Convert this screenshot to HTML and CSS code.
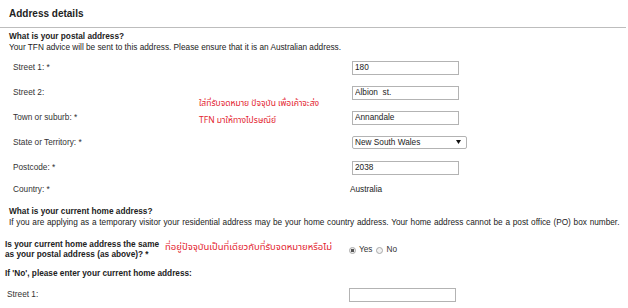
FILE: index.html
```html
<!DOCTYPE html>
<html lang="en">
<head>
    <meta charset="UTF-8">
    <title>Address details</title>
    <link rel="stylesheet" href="styles.css">
</head>
<body>

<div class="page">
    <h2 class="page-title">Address details</h2>

    <div class="section postal">
        <div class="intro">
            <div class="question">What is your postal address?</div>
            <div>Your TFN advice will be sent to this address. Please ensure that it is an Australian address.</div>
        </div>

        <div class="rows">
            <div class="form-row">
                <label class="form-label">Street 1: *</label>
                <input type="text" class="text-field" value="180">
            </div>
            <div class="form-row">
                <label class="form-label">Street 2:</label>
                <input type="text" class="text-field" value="Albion  st.">
            </div>
            <div class="form-row">
                <label class="form-label">Town or suburb: *</label>
                <input type="text" class="text-field" value="Annandale">
            </div>
            <div class="form-row">
                <label class="form-label">State or Territory: *</label>
                <span class="select-wrap">
                    <select class="select-field">
                        <option>New South Wales</option>
                    </select>
                    <svg class="select-arrow" width="5" height="4" viewBox="0 0 5 4"><path d="M0 0h5L2.5 4z" fill="#111"/></svg>
                </span>
            </div>
            <div class="form-row">
                <label class="form-label">Postcode: *</label>
                <input type="text" class="text-field" value="2038">
            </div>
            <div class="form-row short">
                <label class="form-label">Country: *</label>
                <span class="static-value">Australia</span>
            </div>
        </div>

        <div class="note note-postal">
            <div>ใส่ที่รับจดหมาย ปัจจุบัน เพื่อเค้าจะส่ง</div>
            <div>TFN มาให้ทางไปรษณีย์</div>
        </div>
    </div>

    <div class="section home">
        <div class="intro">
            <div class="question">What is your current home address?</div>
            <div class="intro-text">If you are applying as a temporary visitor your residential address may be your home country address. Your home address cannot be a post office (PO) box number.</div>
        </div>

        <div class="same-row">
            <div class="question same-label">Is your current home address the same<br>as your postal address (as above)? *</div>
            <div class="note note-same">ที่อยู่ปัจจุบันเป็นที่เดียวกับที่รับจดหมายหรือไม่</div>
            <div class="radio-group">
                <label><input type="radio" name="same" checked> Yes</label>
                <label><input type="radio" name="same"> No</label>
            </div>
        </div>

        <div class="question if-no">If 'No', please enter your current home address:</div>

        <div class="form-row">
            <label class="form-label">Street 1:</label>
            <input type="text" class="text-field">
        </div>
    </div>
</div>

</body>
</html>
```

FILE: styles.css
```css
body {
    margin: 0;
    font-family: "Liberation Sans", Arial, sans-serif;
    font-size: 8.25px;
    color: #222;
    background-color: #fff;
}

.page {
    width: 626px;
}

.page-title {
    margin: 0;
    padding: 8px 9px 0;
    height: 19px;
    font-size: 10px;
    line-height: 12px;
    border-bottom: 1px solid #bdbdbd;
}

.section {
    position: relative;
}

.intro {
    line-height: 11px;
}

.postal .intro {
    margin-top: 3px;
    padding-left: 9px;
}

.question {
    font-weight: bold;
}

.rows {
    margin-top: 2px;
}

.form-row {
    display: flex;
    align-items: center;
    height: 25px;
}

.form-row.short {
    height: 18px;
}

.postal .form-row {
    padding-left: 13px;
}

.form-label {
    width: 339px;
    color: #333;
}

.text-field {
    box-sizing: border-box;
    width: 107px;
    height: 14px;
    margin: 0;
    padding: 0 2px;
    border: 1px solid #b3b3b3;
    font-family: inherit;
    font-size: 8.25px;
    color: #222;
}

.select-wrap {
    position: relative;
    display: inline-block;
}

.select-field {
    -webkit-appearance: none;
    appearance: none;
    box-sizing: border-box;
    width: 115px;
    height: 13px;
    margin: 0;
    padding: 0 2px;
    border: 1px solid #b3b3b3;
    border-radius: 2px;
    background-color: #fff;
    font-family: inherit;
    font-size: 8.25px;
    color: #222;
    display: block;
}

.select-arrow {
    position: absolute;
    right: 6px;
    top: 4px;
}

.static-value {
    margin-left: -2px;
}

.note {
    color: #e3242f;
    font-family: "Noto Sans Thai", Tahoma, "DejaVu Sans", sans-serif;
    font-size: 8.5px;
}

.note-postal {
    position: absolute;
    left: 199px;
    top: 64px;
    line-height: 17px;
}

.home .intro {
    margin-top: 8px;
    padding-left: 9px;
}

.intro-text {
    word-spacing: 0.45px;
}

.same-row {
    display: flex;
    align-items: center;
    margin-top: 12px;
    padding-left: 5px;
    line-height: 10px;
}

.same-label {
    width: 160px;
    flex-shrink: 0;
}

.note-same {
    width: 184px;
    flex-shrink: 0;
    margin-top: -7px;
    font-size: 9.5px;
}

.radio-group {
    display: flex;
    gap: 4px;
    color: #333;
}

.radio-group label {
    display: flex;
    align-items: center;
    gap: 3px;
}

.radio-group input {
    -webkit-appearance: none;
    appearance: none;
    width: 7px;
    height: 7px;
    margin: 0;
    border: 1px solid #a8a8a8;
    border-radius: 50%;
    background-color: #f2f2f2;
}

.radio-group input:checked {
    background: radial-gradient(circle, #555 0, #555 1.5px, #eee 2px);
}

.if-no {
    margin-top: 9px;
    padding-left: 5px;
    line-height: 10px;
}

.home .form-row {
    padding-left: 7px;
    margin-top: 3px;
}

.home .form-label {
    width: 342px;
}
```
